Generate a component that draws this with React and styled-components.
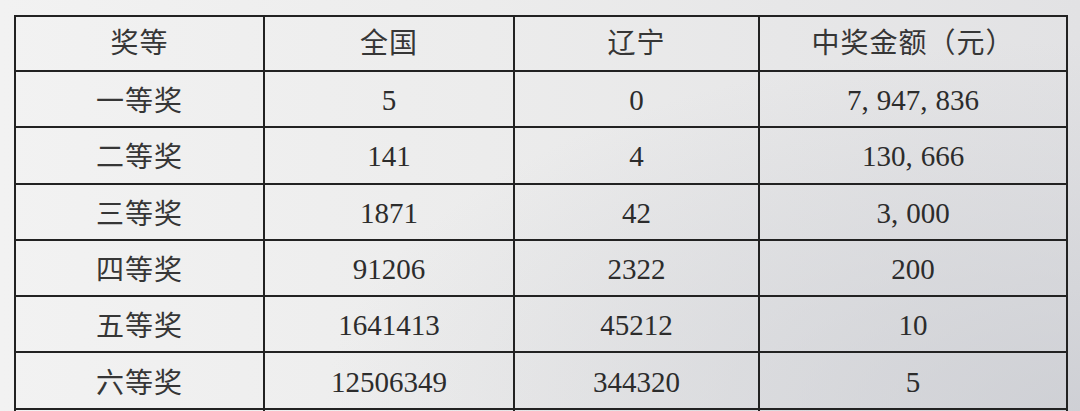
import React from 'react';
import styled, { createGlobalStyle } from 'styled-components';

const GlobalStyle = createGlobalStyle`
  html, body {
    margin: 0;
    padding: 0;
    height: 411px;
    overflow: hidden;
  }
  body {
    background:
      radial-gradient(ellipse 70% 90% at 100% 100%, rgba(200, 202, 208, 0.75), rgba(200, 202, 208, 0) 100%),
      linear-gradient(90deg, #f2f2f2 0%, #ececec 45%, #e2e2e4 100%);
  }
`;

const rows = [
  ['一等奖', '5', '0', '7,947,836'],
  ['二等奖', '141', '4', '130,666'],
  ['三等奖', '1871', '42', '3,000'],
  ['四等奖', '91206', '2322', '200'],
  ['五等奖', '1641413', '45212', '10'],
  ['六等奖', '12506349', '344320', '5'],
];

const Page = styled.div`
  padding: 15px 0 0 14px;
  font-family: "Liberation Serif", "Noto Sans CJK SC", serif;
  color: #2c2c2c;
`;

const Table = styled.table`
  border-collapse: collapse;
  table-layout: fixed;
  width: 1052px;
  border: 2px solid #222;
`;

const Cell = styled.td`
  border: 2px solid #222;
  height: ${(p) => (p.$head ? 51 : 51.3)}px;
  padding: ${(p) => (p.$head ? '0 0 2px' : '3px 0 0')};
  text-align: center;
  vertical-align: middle;
  font-size: 29px;
  line-height: 1;
  white-space: nowrap;
`;

const Label = styled.span`
  font-family: "Noto Sans CJK SC", sans-serif;
  font-weight: 400;
  font-size: 28px;
  letter-spacing: 1px;
  color: #363636;
`;

const Comma = styled.span`
  padding-right: 8px;
`;

function Amount({ value }) {
  const parts = value.split(',');
  return parts.map((part, i) => (
    <React.Fragment key={i}>
      {part}
      {i < parts.length - 1 && <Comma>,</Comma>}
    </React.Fragment>
  ));
}

export default function App() {
  return (
    <>
      <GlobalStyle />
      <Page>
        <Table>
          <colgroup>
            <col style={{ width: 249 }} />
            <col style={{ width: 250 }} />
            <col style={{ width: 245 }} />
            <col style={{ width: 308 }} />
          </colgroup>
          <thead>
            <tr>
              <Cell as="th" $head><Label>奖等</Label></Cell>
              <Cell as="th" $head><Label>全国</Label></Cell>
              <Cell as="th" $head><Label>辽宁</Label></Cell>
              <Cell as="th" $head><Label>中奖金额（元）</Label></Cell>
            </tr>
          </thead>
          <tbody>
            {rows.map((r) => (
              <tr key={r[0]}>
                <Cell><Label>{r[0]}</Label></Cell>
                <Cell>{r[1]}</Cell>
                <Cell>{r[2]}</Cell>
                <Cell><Amount value={r[3]} /></Cell>
              </tr>
            ))}
            <tr>
              <Cell />
              <Cell />
              <Cell />
              <Cell />
            </tr>
          </tbody>
        </Table>
      </Page>
    </>
  );
}
